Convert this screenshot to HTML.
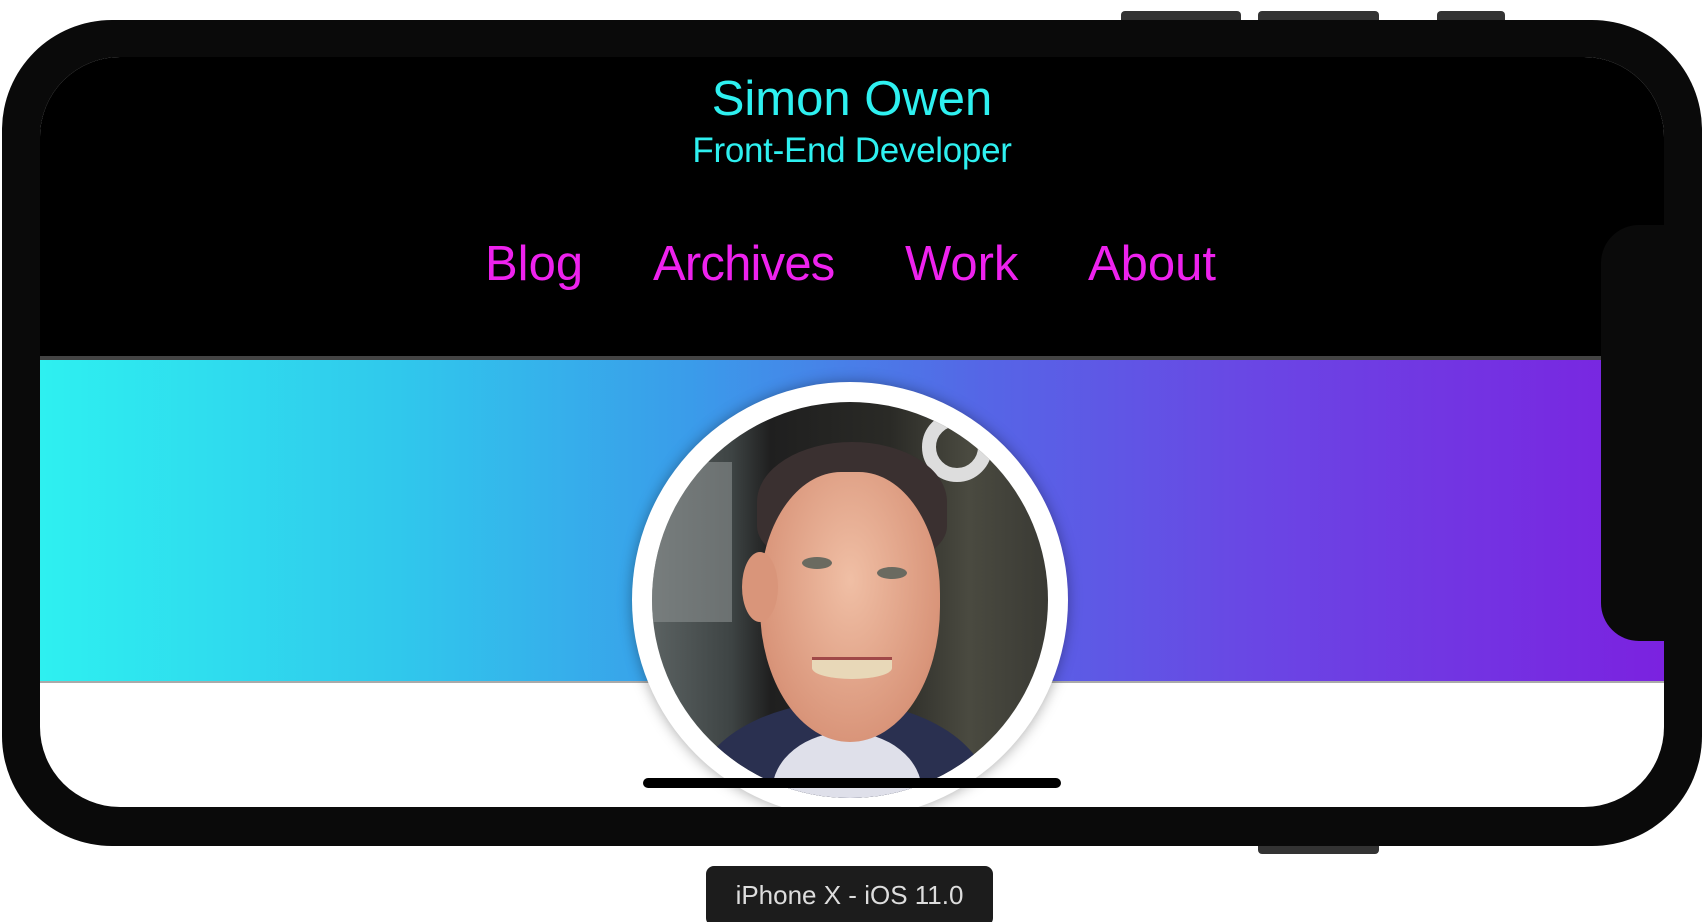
<!DOCTYPE html>
<html><head><meta charset="utf-8"><style>
*{margin:0;padding:0;box-sizing:border-box}
html,body{width:1704px;height:922px;background:#fff;overflow:hidden;position:relative;font-family:"Liberation Sans",sans-serif}
.abs{position:absolute}
.btn{position:absolute;background:#333;border-radius:4px}
.phone{left:2px;top:20px;width:1700px;height:826px;background:#0a0a0a;border-radius:110px}
.screen{left:40px;top:57px;width:1624px;height:750px;border-radius:80px;overflow:hidden;background:#fff}
.hdr{left:0;top:0;width:1624px;height:299px;background:#000}
.line1{left:0;top:299px;width:1624px;height:4px;background:#444}
.band{left:0;top:303px;width:1624px;height:321px;background:linear-gradient(90deg,#2ef0f0 0%,#30c8ec 22%,#3a9cea 40%,#5566e6 58%,#6a46e4 75%,#7b22e0 100%)}
.line2{left:0;top:624px;width:1624px;height:2px;background:#aaa}
.t{position:absolute;white-space:nowrap;font-weight:300}
.nav{color:#ee22ee;font-size:49px;top:183px;line-height:49px}
.notch{left:1601px;top:225px;width:80px;height:416px;background:#0a0a0a;border-radius:38px 0 0 38px}
.av{left:592px;top:325px;width:436px;height:436px;border-radius:50%;background:#fff;box-shadow:0 0 14px rgba(0,0,0,.35)}
.ph{left:20px;top:20px;width:396px;height:396px;border-radius:50%;overflow:hidden;background:linear-gradient(90deg,#5b6262 0%,#3e4444 20%,#1f1f1f 30%,#2a2a26 60%,#4a4a40 80%,#3a3a34 100%)}
.home{left:603px;top:721px;width:418px;height:10px;background:#000;border-radius:5px}
</style></head><body>
<div class="btn" style="left:1121px;top:11px;width:120px;height:14px"></div>
<div class="btn" style="left:1258px;top:11px;width:121px;height:14px"></div>
<div class="btn" style="left:1437px;top:11px;width:68px;height:14px"></div>
<div class="btn" style="left:1258px;top:840px;width:121px;height:14px"></div>
<div class="abs phone"></div>
<div class="abs screen">
  <div class="abs hdr"></div>
  <div class="abs line1"></div>
  <div class="abs band"></div>
  <div class="abs line2"></div>
  <div class="t" style="left:0;width:1624px;text-align:center;top:12px;font-size:49px;line-height:60px;color:#2ef0f0">Simon Owen</div>
  <div class="t" style="left:0;width:1624px;text-align:center;top:74px;font-size:35px;line-height:40px;color:#2ef0f0;letter-spacing:-0.3px">Front-End Developer</div>
  <div class="t nav" style="left:445px">Blog</div>
  <div class="t nav" style="left:613px;letter-spacing:-0.8px">Archives</div>
  <div class="t nav" style="left:865px">Work</div>
  <div class="t nav" style="left:1048px">About</div>
  <div class="abs av"><div class="abs ph">
    <div class="abs" style="left:0;top:60px;width:80px;height:160px;background:#8a9090;opacity:.6"></div>
    <div class="abs" style="left:270px;top:10px;width:70px;height:70px;border:14px solid #ddd;border-radius:50%"></div>
    <div class="abs" style="left:40px;top:300px;width:300px;height:200px;border-radius:50%;background:#2a3050"></div>
    <div class="abs" style="left:120px;top:330px;width:150px;height:120px;border-radius:50%;background:#dfe0ea"></div>
    <div class="abs" style="left:105px;top:40px;width:190px;height:120px;border-radius:50% 50% 30% 30%;background:#3a3030"></div>
    <div class="abs" style="left:108px;top:70px;width:180px;height:270px;border-radius:45% 45% 50% 50%;background:radial-gradient(ellipse at 50% 40%,#f0bfa5,#d9957a 70%,#c07a62)"></div>
    <div class="abs" style="left:90px;top:150px;width:36px;height:70px;border-radius:50%;background:#d9957a"></div>
    <div class="abs" style="left:150px;top:155px;width:30px;height:12px;border-radius:50%;background:#6a6a60"></div>
    <div class="abs" style="left:225px;top:165px;width:30px;height:12px;border-radius:50%;background:#6a6a60"></div>
    <div class="abs" style="left:160px;top:255px;width:80px;height:22px;border-radius:0 0 50% 50%;background:#e8d8b8;border-top:3px solid #a04848"></div>
  </div></div>
  <div class="abs home"></div>
</div>
<div class="abs notch"></div>
<div class="abs" style="left:706px;top:866px;width:287px;height:60px;background:#1c1c1c;border-radius:8px"></div>
<div class="t" style="left:706px;width:287px;text-align:center;top:878px;font-size:26px;line-height:34px;color:#ddd;font-weight:400">iPhone X - iOS 11.0</div>
</body></html>
